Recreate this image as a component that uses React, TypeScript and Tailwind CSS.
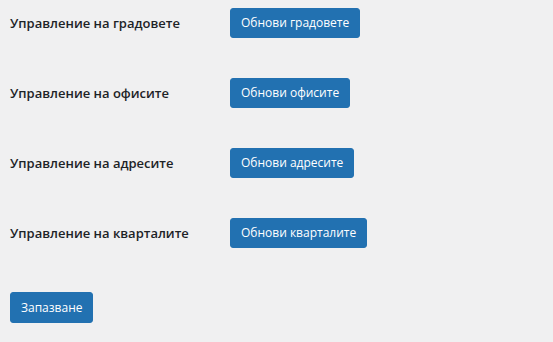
const rows = [
  { label: 'Управление на градовете', button: 'Обнови градовете' },
  { label: 'Управление на офисите', button: 'Обнови офисите' },
  { label: 'Управление на адресите', button: 'Обнови адресите' },
  { label: 'Управление на кварталите', button: 'Обнови кварталите' },
];

export default function App() {
  return (
    <div className="min-h-screen w-full bg-[#f0f0f1] pl-[10px] pt-2 text-[#1d2327] font-['Open_Sans',sans-serif]">
      <div className="flex flex-col gap-[40px]">
        {rows.map((row) => (
          <div key={row.label} className="flex items-center h-[30px]">
            <div className="w-[220px] text-[13px] font-semibold leading-[1.3]">{row.label}</div>
            <button className="h-[30px] px-[10px] rounded-[3px] border border-[#2271b1] bg-[#2271b1] text-white text-[12px] leading-[28px]">
              {row.button}
            </button>
          </div>
        ))}
      </div>
      <button className="mt-[44px] h-[31px] px-[10px] rounded-[3px] border border-[#2271b1] bg-[#2271b1] text-white text-[12px] leading-[29px]">
        Запазване
      </button>
    </div>
  );
}
